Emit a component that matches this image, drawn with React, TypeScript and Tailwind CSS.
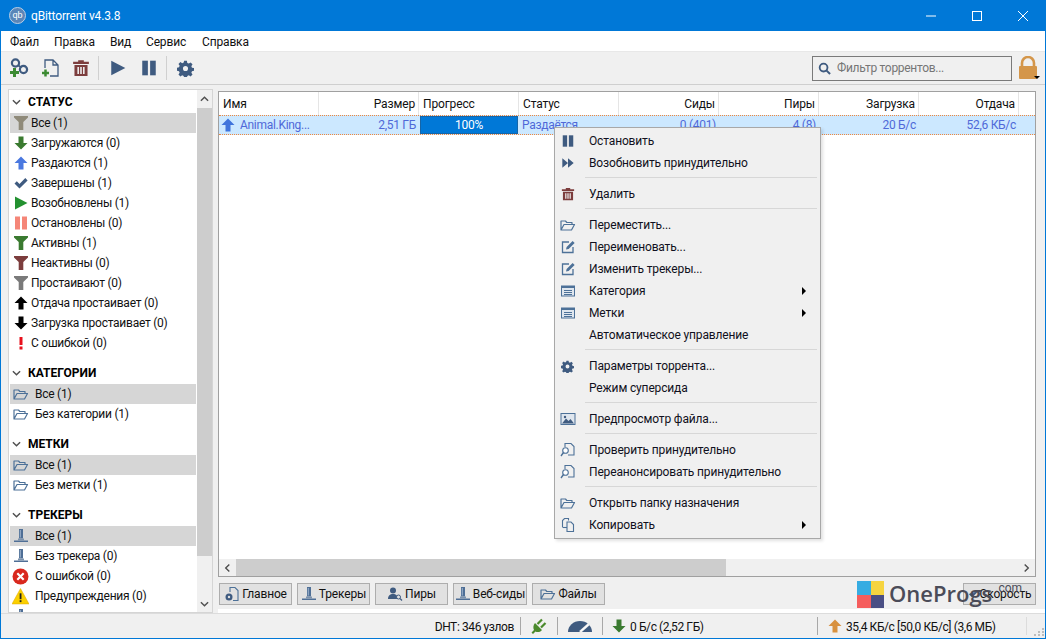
import type { ReactNode } from "react";

const NAVY = "#3f5b80";
const FOLDER = "#4d7198";

function Ico({ size = 16, children }: { size?: number; children: ReactNode }) {
  return (
    <svg viewBox="0 0 16 16" width={size} height={size} className="shrink-0" aria-hidden="true">
      {children}
    </svg>
  );
}

const Funnel = ({ color }: { color: string }) => (
  <Ico size={16}>
    <path d="M1 1h14v1.500l-4.700 4.500v8H5.700V7L1 2.500z" fill={color} />
  </Ico>
);
const ArrowUp = ({ color, size = 16 }: { color: string; size?: number }) => (
  <Ico size={size}>
    <path d="M8 1.500l6.500 6.500h-4v6.500h-5V8h-4z" fill={color} />
  </Ico>
);
const ArrowDown = ({ color, size = 16 }: { color: string; size?: number }) => (
  <Ico size={size}>
    <path d="M8 14.500L1.500 8h4V1.500h5V8h4z" fill={color} />
  </Ico>
);
const Check = () => (
  <Ico>
    <path d="M1.500 8.500l2.300-2.300 2.700 2.700 5.800-5.800 2.300 2.300-8.100 8.100z" fill={NAVY} />
  </Ico>
);
const Play = ({ color, size = 16 }: { color: string; size?: number }) => (
  <Ico size={size}>
    <path d="M2 1.500l12.500 6.500L2 14.500z" fill={color} />
  </Ico>
);
const Pause = ({ color, size = 16 }: { color: string; size?: number }) => (
  <Ico size={size}>
    <rect x="2" y="1.500" width="5" height="13" fill={color} />
    <rect x="9" y="1.500" width="5" height="13" fill={color} />
  </Ico>
);
const Bang = () => (
  <Ico>
    <rect x="6.500" y="2" width="3" height="8" fill="#e8101c" />
    <rect x="6.500" y="11.500" width="3" height="3" fill="#e8101c" />
  </Ico>
);
const Folder = ({ size = 16 }: { size?: number }) => (
  <Ico size={size}>
    <path
      d="M1 13V4h4.500l1.300 1.500H12V7.500M1 13h10.500l3-5.500H4L1 13z"
      fill="none"
      stroke={FOLDER}
      strokeWidth="1.200"
      strokeLinejoin="round"
    />
  </Ico>
);
const Tracker = ({ size = 16 }: { size?: number }) => (
  <Ico size={size}>
    <path d="M6 1h4v9.500H6z" fill="#4f6f96" />
    <path d="M6.800 2h1v7.500h-1z" fill="#9db3cc" />
    <path d="M1 12.500h14v1.500H1z" fill="#4f6f96" />
    <path d="M5 10.500h6v2H5z" fill="#7d93ad" />
  </Ico>
);
const ErrorDot = () => (
  <Ico size={17}>
    <circle cx="8" cy="8" r="7.500" fill="#d9281e" />
    <path d="M5 5l6 6M11 5l-6 6" stroke="#fff" strokeWidth="2" />
  </Ico>
);
const Warn = () => (
  <Ico size={17}>
    <path d="M8 0.500L16 15H0z" fill="#fbd000" stroke="#e0a800" strokeWidth="0.500" />
    <rect x="7.200" y="5" width="1.700" height="5.500" fill="#222" />
    <rect x="7.200" y="11.500" width="1.700" height="1.800" fill="#222" />
  </Ico>
);
const Trash = ({ size = 16 }: { size?: number }) => (
  <Ico size={size}>
    <path d="M5.500 1h5v1.500h4.500v2H1V2.500h4.500z" fill="#7c3d3d" />
    <path
      d="M2.200 5.300h11.600v9.700H2.200zM4.800 7v6.300h1.400V7zM7.300 7v6.300h1.400V7zM9.800 7v6.300h1.400V7z"
      fill="#7c3d3d"
      fillRule="evenodd"
    />
  </Ico>
);
const Gear = ({ size = 16 }: { size?: number }) => (
  <Ico size={size}>
    <path
      d="M6.700 0.800h2.600l0.400 2 1.400 0.600 1.700-1.100 1.800 1.800-1.100 1.700 0.600 1.400 2 0.400v2.600l-2 0.400-0.600 1.400 1.100 1.700-1.800 1.800-1.700-1.100-1.400 0.600-0.400 2H6.700l-0.400-2-1.400-0.600-1.700 1.100-1.800-1.800 1.100-1.700-0.600-1.400-2-0.400V7.200l2-0.400 0.600-1.400-1.100-1.700 1.800-1.800 1.700 1.100 1.400-0.600zM8 5.600a2.400 2.400 0 1 0 0 4.800 2.400 2.400 0 0 0 0-4.800z"
      fill={NAVY}
      fillRule="evenodd"
    />
  </Ico>
);
const Edit = () => (
  <Ico>
    <path d="M9 3H2.500v10.500H13V8" fill="none" stroke={FOLDER} strokeWidth="1.300" />
    <path d="M6 10.500l0.600-2.600 6-6 2 2-6 6z" fill={FOLDER} />
  </Ico>
);
const ListBox = () => (
  <Ico>
    <rect x="1.500" y="3" width="13" height="10" fill="#dfe6ee" stroke={FOLDER} />
    <rect x="1.500" y="3" width="13" height="2" fill={FOLDER} />
    <path d="M4 7.500h8M4 9.500h8M4 11.500h8" stroke={FOLDER} strokeWidth="1" />
  </Ico>
);
const Preview = () => (
  <Ico>
    <rect x="1" y="2.500" width="14" height="11" fill="#dfe6ee" stroke={FOLDER} />
    <path d="M2 12.500l4-5 2.500 2.500 2-2 3.500 4.500z" fill={NAVY} />
    <circle cx="5" cy="6" r="1.200" fill={NAVY} />
  </Ico>
);
const CheckFile = () => (
  <Ico>
    <path d="M5 5V1.500h6l3 3v8.500H8" fill="none" stroke={FOLDER} strokeWidth="1.100" />
    <circle cx="5.500" cy="8.500" r="2.800" fill="#fff" stroke={FOLDER} strokeWidth="1.100" />
    <path d="M3.500 10.500L1 14" stroke={FOLDER} strokeWidth="1.400" />
  </Ico>
);
const Copy = () => (
  <Ico>
    <path d="M2.500 10V3.500l2-2h4v2M7 5h4l2.500 2.500v7H7z" fill="none" stroke={FOLDER} strokeWidth="1.100" />
    <path d="M2.500 10.500H7" stroke={FOLDER} strokeWidth="1.100" />
  </Ico>
);
const DocGear = () => (
  <Ico>
    <path d="M6 6V1.500h5l3 3v10H9" fill="none" stroke={FOLDER} strokeWidth="1.100" />
    <circle cx="5" cy="11" r="3.500" fill={NAVY} />
    <circle cx="5" cy="11" r="1.200" fill="#e1e1e1" />
  </Ico>
);
const Peers = () => (
  <Ico>
    <circle cx="6" cy="4.500" r="3" fill={NAVY} />
    <path d="M1 13c0-3.500 2-5 5-5s5 1.500 5 5z" fill={NAVY} />
    <circle cx="11.500" cy="11" r="2" fill="#e1e1e1" stroke={NAVY} />
    <path d="M13 12.500l2 2" stroke={NAVY} strokeWidth="1.300" />
  </Ico>
);

type Row = { label: string; icon: ReactNode };

const STATUS: Row[] = [
  { label: "Все (1)", icon: <Funnel color="#8f8a79" /> },
  { label: "Загружаются (0)", icon: <ArrowDown color="#3a7a30" /> },
  { label: "Раздаются (1)", icon: <ArrowUp color="#4a78e0" /> },
  { label: "Завершены (1)", icon: <Check /> },
  { label: "Возобновлены (1)", icon: <Play color="#239130" /> },
  { label: "Остановлены (0)", icon: <Pause color="#f58678" /> },
  { label: "Активны (1)", icon: <Funnel color="#3a7a30" /> },
  { label: "Неактивны (0)", icon: <Funnel color="#7c3d3d" /> },
  { label: "Простаивают (0)", icon: <Funnel color="#7a7a7a" /> },
  { label: "Отдача простаивает (0)", icon: <ArrowUp color="#000" /> },
  { label: "Загрузка простаивает (0)", icon: <ArrowDown color="#000" /> },
  { label: "С ошибкой (0)", icon: <Bang /> },
];

const SECTIONS: { title: string; rows: Row[]; gap: string }[] = [
  { title: "СТАТУС", rows: STATUS, gap: "gap-[1px]" },
  {
    title: "КАТЕГОРИИ",
    gap: "gap-[5px]",
    rows: [
      { label: "Все (1)", icon: <Folder /> },
      { label: "Без категории (1)", icon: <Folder /> },
    ],
  },
  {
    title: "МЕТКИ",
    gap: "gap-[5px]",
    rows: [
      { label: "Все (1)", icon: <Folder /> },
      { label: "Без метки (1)", icon: <Folder /> },
    ],
  },
  {
    title: "ТРЕКЕРЫ",
    gap: "gap-[5px]",
    rows: [
      { label: "Все (1)", icon: <Tracker /> },
      { label: "Без трекера (0)", icon: <Tracker /> },
      { label: "С ошибкой (0)", icon: <ErrorDot /> },
      { label: "Предупреждения (0)", icon: <Warn /> },
      { label: "", icon: <Tracker /> },
    ],
  },
];

const COLUMNS = [
  { label: "Имя", left: true },
  { label: "Размер" },
  { label: "Прогресс", left: true },
  { label: "Статус", left: true },
  { label: "Сиды" },
  { label: "Пиры" },
  { label: "Загрузка" },
  { label: "Отдача" },
];

type MenuItem = { label: string; icon?: ReactNode; sub?: boolean } | "sep";

const MENU: MenuItem[] = [
  { label: "Остановить", icon: <Pause color={NAVY} size={14} /> },
  {
    label: "Возобновить принудительно",
    icon: (
      <Ico size={14}>
        <path d="M1.500 2.500L8 8l-6.500 5.500zM8 2.500L14.500 8 8 13.500z" fill={NAVY} />
      </Ico>
    ),
  },
  "sep",
  { label: "Удалить", icon: <Trash size={14} /> },
  "sep",
  { label: "Переместить...", icon: <Folder /> },
  { label: "Переименовать...", icon: <Edit /> },
  { label: "Изменить трекеры...", icon: <Edit /> },
  { label: "Категория", icon: <ListBox />, sub: true },
  { label: "Метки", icon: <ListBox />, sub: true },
  { label: "Автоматическое управление" },
  "sep",
  { label: "Параметры торрента...", icon: <Gear size={13} /> },
  { label: "Режим суперсида" },
  "sep",
  { label: "Предпросмотр файла...", icon: <Preview /> },
  "sep",
  { label: "Проверить принудительно", icon: <CheckFile /> },
  { label: "Переанонсировать принудительно", icon: <CheckFile /> },
  "sep",
  { label: "Открыть папку назначения", icon: <Folder /> },
  { label: "Копировать", icon: <Copy />, sub: true },
];

const TABS = [
  { label: "Главное", icon: <DocGear />, w: "w-[73px]" },
  { label: "Трекеры", icon: <Tracker />, w: "w-[73px]" },
  { label: "Пиры", icon: <Peers />, w: "w-[73px]" },
  { label: "Веб-сиды", icon: <Tracker />, w: "w-[74px]" },
  { label: "Файлы", icon: <Folder />, w: "w-[73px]" },
];

function Chevron({ up }: { up?: boolean }) {
  return (
    <svg viewBox="0 0 10 6" width="9" height="6" aria-hidden="true">
      <path d={up ? "M1 5l4-4 4 4" : "M1 1l4 4 4-4"} fill="none" stroke="#505050" strokeWidth="1.600" />
    </svg>
  );
}

function Sidebar() {
  return (
    <div className="flex h-[524px] w-[205px] border border-[#d5d5d5] bg-white">
      <div className="w-[188px] overflow-hidden pt-[1px]">
        {SECTIONS.map((s, si) => (
          <div key={s.title} className={si === 0 ? "" : "mt-[9px]"}>
            <div className="flex h-[22px] items-center text-[12px] font-bold tracking-normal text-black">
              <span className="flex w-[15px] justify-center">
                <Chevron />
              </span>
              <span className="ml-[4px]">{s.title}</span>
            </div>
            {s.rows.map((r, i) => (
              <div
                key={i}
                className={`mx-[1px] flex h-[20px] items-center pl-[1px] tracking-[-0.25px] ${s.gap} ${i === 0 ? "bg-[#d6d6d6]" : ""}`}
              >
                <span className="flex w-[19px] justify-center">{r.icon}</span>
                <span className="whitespace-nowrap">{r.label}</span>
              </div>
            ))}
          </div>
        ))}
      </div>
      <div className="flex w-[15px] flex-col bg-[#f0f0f0]">
        <div className="flex h-[18px] items-center justify-center">
          <Chevron up />
        </div>
        <div className="h-[448px] bg-[#cdcdcd]" />
        <div className="flex-1" />
        <div className="flex h-[17px] items-center justify-center">
          <Chevron />
        </div>
      </div>
    </div>
  );
}

function TorrentTable() {
  return (
    <div className="flex h-[486px] flex-col border border-[#a0a0a0] bg-white">
      <div className="flex h-[23px] shrink-0">
        {COLUMNS.map((c) => (
          <div
            key={c.label}
            className={`flex w-[100px] items-center border-r border-[#e5e5e5] pt-[1px] ${c.left ? "justify-start pl-[4px]" : "justify-end pr-[3px]"}`}
          >
            {c.label}
          </div>
        ))}
      </div>
      <div className="flex h-[20px] shrink-0 border-y border-dotted border-[#f0883e] bg-[#cce8ff] tracking-[-0.3px] text-[#4f68d8]">
        <div className="flex w-[100px] items-center gap-[4px] pl-[1px]">
          <ArrowUp color="#3f74dc" />
          <span>Animal.King...</span>
        </div>
        <div className="flex w-[100px] items-center justify-end pr-[3px]">2,51 ГБ</div>
        <div className="flex w-[100px] pl-[1px]">
          <div className="flex w-[98px] items-center justify-center border border-[#1565a8] bg-[#0078d7] text-white">100%</div>
        </div>
        <div className="flex w-[100px] items-center pl-[3px]">Раздаётся</div>
        <div className="flex w-[100px] items-center justify-end pr-[3px]">0 (401)</div>
        <div className="flex w-[100px] items-center justify-end pr-[3px]">4 (8)</div>
        <div className="flex w-[100px] items-center justify-end pr-[3px]">20 Б/с</div>
        <div className="flex w-[100px] items-center justify-end pr-[3px]">52,6 КБ/с</div>
      </div>
      <div className="flex-1" />
      <div className="flex h-[17px] shrink-0 items-center bg-[#f0f0f0]">
        <div className="flex w-[17px] justify-center">
          <span className="-rotate-90">
            <Chevron up />
          </span>
        </div>
        <div className="h-full w-[490px] bg-[#cdcdcd]" />
        <div className="flex-1" />
        <div className="flex w-[17px] justify-center">
          <span className="rotate-90">
            <Chevron up />
          </span>
        </div>
      </div>
    </div>
  );
}

function ContextMenu() {
  return (
    <div className="absolute left-[553px] top-[127px] w-[267px] border border-[#a8a8a8] bg-[#f0f0f0] py-[2px] tracking-[-0.15px] shadow-[2px_2px_3px_rgba(0,0,0,0.12)]">
      {MENU.map((m, i) =>
        m === "sep" ? (
          <div key={i} className="h-[9px] pl-[30px] pr-[3px] pt-[3px]">
            <div className="h-px bg-[#d7d7d7]" />
          </div>
        ) : (
          <div key={i} className="flex h-[22px] items-center text-[#101020]">
            <span className="flex w-[25px] justify-center">{m.icon}</span>
            <span className="ml-[9px] flex-1 whitespace-nowrap">{m.label}</span>
            {m.sub && <span className="mr-[14px] h-0 w-0 border-y-[4px] border-l-[4px] border-y-transparent border-l-black" />}
          </div>
        ),
      )}
    </div>
  );
}

function Watermark() {
  return (
    <div className="pointer-events-none absolute left-[856px] top-[581px] flex items-start">
      <div className="grid h-[27px] w-[27px] grid-cols-2 grid-rows-2">
        <div className="bg-[#36ace2]" />
        <div className="bg-[#f6d440]" />
        <div className="bg-[#f55d5d]" />
        <div className="bg-[#4a4f84]" />
      </div>
      <span className="ml-[5px] mt-[1px] font-['Open_Sans',sans-serif] text-[22px] font-semibold tracking-normal text-[#4b4c58]">
        OneProgs
      </span>
      <span className="ml-[3px] mt-[1px] text-[12px] tracking-normal text-[#4b4c58]">.com</span>
    </div>
  );
}

function Sep() {
  return <span className="h-[18px] w-px bg-[#a8a8a8]" />;
}

function StatusBar() {
  return (
    <div className="flex h-[25px] items-center border-t border-[#dcdcdc] text-[12px] tracking-[-0.4px]">
      <div className="flex-1" />
      <span className="mr-[6px] pt-[1px]">DHT: 346 узлов</span>
      <Sep />
      <span className="flex w-[36px] justify-center">
        <Ico size={16}>
          <path d="M4 5l7 7c-2 2.500-5 2.500-6.500 1.500L2 16 0.500 14.500 3 12C2 10 2 7.500 4 5z" fill="#4b8a2c" />
          <path d="M6.500 6L11 1.500M10 9.500l4.500-4.500" stroke="#4b8a2c" strokeWidth="2.200" />
        </Ico>
      </span>
      <Sep />
      <span className="flex w-[44px] justify-center">
        <svg viewBox="0 0 24 12" width="24" height="12" aria-hidden="true">
          <path d="M0 12a12 11 0 0 1 24 0z" fill={NAVY} />
          <path d="M12 12l9-8" stroke="#f0f0f0" strokeWidth="2.500" />
          <path d="M13 11l7-6" stroke="#fff" strokeWidth="1" />
        </svg>
      </span>
      <Sep />
      <span className="ml-[8px] flex w-[206px] items-center gap-[3px]">
        <ArrowDown color="#3a7a30" />
        <span className="pt-[1px]">0 Б/с (2,52 ГБ)</span>
      </span>
      <Sep />
      <span className="ml-[9px] flex w-[199px] items-center gap-[3px]">
        <ArrowUp color="#d8913f" />
        <span className="pt-[1px]">35,4 КБ/с [50,0 КБ/с] (3,6 МБ)</span>
      </span>
      <span className="h-[18px] w-px bg-[#dcdcdc]" />
      <span className="grid w-[18px] grid-cols-3 justify-items-center gap-[1px] self-end pb-[2px] pl-[6px]">
        <i />
        <i />
        <i className="h-[2px] w-[2px] bg-[#bdbdbd]" />
        <i />
        <i className="h-[2px] w-[2px] bg-[#bdbdbd]" />
        <i className="h-[2px] w-[2px] bg-[#bdbdbd]" />
        <i className="h-[2px] w-[2px] bg-[#bdbdbd]" />
        <i className="h-[2px] w-[2px] bg-[#bdbdbd]" />
        <i className="h-[2px] w-[2px] bg-[#bdbdbd]" />
      </span>
    </div>
  );
}

export default function App() {
  return (
    <div className="relative flex h-[639px] w-[1046px] flex-col overflow-hidden border-x border-b border-[#0078d7] bg-[#f0f0f0] font-['Roboto',sans-serif] text-[12px] leading-none tracking-[-0.15px] text-[#111]">
      {/* Title bar */}
      <div className="-mx-px flex h-[31px] shrink-0 items-center bg-[#0078d7] pl-[9px] text-white">
        <span className="flex h-[17px] w-[17px] items-center justify-center rounded-full border border-[#b9cfe6] bg-[#5a86b8] text-[9px]">
          qb
        </span>
        <span className="ml-[5px]">qBittorrent v4.3.8</span>
        <div className="flex-1" />
        <div className="flex h-full">
          {[
            <path key="m" d="M0 5h10" stroke="#fff" />,
            <rect key="r" x="0.500" y="0.500" width="9" height="9" fill="none" stroke="#fff" />,
            <path key="x" d="M0 0l10 10M10 0L0 10" stroke="#fff" />,
          ].map((g, i) => (
            <span key={i} className="flex w-[46px] items-center justify-center">
              <svg viewBox="0 0 10 10" width="10" height="10" aria-hidden="true">
                {g}
              </svg>
            </span>
          ))}
        </div>
      </div>

      {/* Menu */}
      <div className="-mx-px flex h-[20px] shrink-0 items-center bg-white pl-[10px] pt-[1px] text-[12px]">
        <span className="w-[44px]">Файл</span>
        <span className="w-[56px]">Правка</span>
        <span className="w-[36px]">Вид</span>
        <span className="w-[56px]">Сервис</span>
        <span>Справка</span>
      </div>

      {/* Toolbar */}
      <div className="flex h-[34px] shrink-0 items-center border-y border-t-[#e8e8e8] border-b-[#cfcfcf] pl-[8px]">
        <span className="w-[30px]">
          <svg viewBox="0 0 20 20" width="20" height="20" aria-hidden="true">
            <circle cx="6.500" cy="5" r="3.600" fill="none" stroke={NAVY} strokeWidth="2.200" />
            <circle cx="14.500" cy="11.500" r="3.600" fill="none" stroke={NAVY} strokeWidth="2.200" />
            <path d="M8.500 7l4 2.500" stroke={NAVY} strokeWidth="2" />
            <path d="M1 14.500h9M5.500 10v9" stroke="#3c8a32" strokeWidth="3" />
          </svg>
        </span>
        <span className="ml-[2px] w-[31px]">
          <svg viewBox="0 0 20 20" width="20" height="20" aria-hidden="true">
            <path d="M4 10V2h8l5 5v11H9M12 2v5h5" fill="none" stroke={NAVY} strokeWidth="1.300" />
            <path d="M1 15h7M4.500 11.500v7" stroke="#3c8a32" strokeWidth="2.500" />
          </svg>
        </span>
        <span className="w-[26px]">
          <Trash size={18} />
        </span>
        <span className="h-[24px] w-px bg-[#d0d0d0]" />
        <span className="ml-[10px] w-[31px]">
          <Play color={NAVY} size={18} />
        </span>
        <span className="w-[26px]">
          <Pause color={NAVY} size={18} />
        </span>
        <span className="h-[24px] w-px bg-[#d0d0d0]" />
        <span className="ml-[10px]">
          <Gear size={17} />
        </span>
        <div className="flex-1" />
        <div className="flex h-[25px] w-[200px] items-center gap-[6px] border border-[#7a7a7a] bg-[#f0f0f0] pl-[5px] tracking-[-0.3px] text-[#767676]">
          <svg viewBox="0 0 14 14" width="13" height="13" aria-hidden="true">
            <circle cx="6" cy="6" r="4.200" fill="none" stroke={NAVY} strokeWidth="2" />
            <path d="M9 9l4 4" stroke={NAVY} strokeWidth="2.200" />
          </svg>
          Фильтр торрентов...
        </div>
        <span className="relative ml-[6px] mr-[5px] w-[22px]">
          <svg viewBox="0 0 20 24" width="20" height="24" aria-hidden="true">
            <path d="M4 11V7a6 6 0 0 1 12 0v4" fill="none" stroke="#d4964a" strokeWidth="2.600" />
            <rect x="1" y="10" width="18" height="13" rx="1" fill="#d4964a" />
          </svg>
          <span className="absolute bottom-[1px] right-0 h-0 w-0 border-x-[3px] border-t-[3px] border-x-transparent border-t-black" />
        </span>
      </div>

      {/* Main */}
      <div className="flex h-[528px] shrink-0 pl-[7px] pt-[4px]">
        <Sidebar />
        <div className="ml-[5px] flex w-[827px] shrink-0 flex-col pt-[2px]">
          <div className="w-[818px]">
            <TorrentTable />
            <div className="mt-[6px] flex h-[22px] gap-[5px] pl-px">
              {TABS.map((t) => (
                <div
                  key={t.label}
                  className={`${t.w} flex items-center justify-center gap-[2px] whitespace-nowrap border border-[#adadad] bg-[#e1e1e1]`}
                >
                  {t.icon}
                  {t.label}
                </div>
              ))}
              <div className="flex-1" />
              <div className="flex w-[73px] items-center justify-center gap-[2px] border border-[#adadad] bg-[#e1e1e1]">
                <Ico size={10}>
                  <path d="M1.500 8.500l2.300-2.300 2.700 2.700 5.800-5.800 2.300 2.300-8.100 8.100z" fill={NAVY} />
                </Ico>
                Скорость
              </div>
            </div>
          </div>
          <div className="mt-[4px] h-[4px] bg-white" />
        </div>
      </div>

      <StatusBar />
      <ContextMenu />
      <Watermark />
    </div>
  );
}
